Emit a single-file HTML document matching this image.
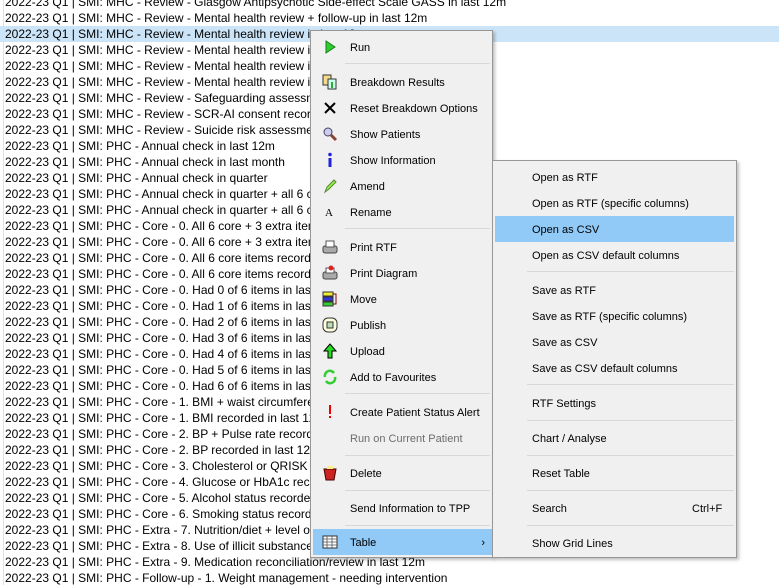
<!DOCTYPE html>
<html><head><meta charset="utf-8"><style>
body{margin:0;width:779px;height:585px;overflow:hidden;background:#fff;font-family:"Liberation Sans",Tahoma,sans-serif;font-size:12px;position:relative}
.list{position:absolute;left:0;top:-6px;width:779px}
.row{height:16px;line-height:16px;padding-left:5px;white-space:nowrap;color:#000}
.row.sel{background:#cce4f7}
.vl{position:absolute;left:3px;top:0;width:1px;height:585px;background:#d8e2ee}
.menu{position:absolute;background:#f0f0f0;border:1px solid #979797;box-shadow:2px 2px 3px rgba(0,0,0,.25);font-size:11px}
.it{position:absolute;left:2px;right:2px;height:26px;line-height:28px;white-space:nowrap;color:#000}
.it .t{position:absolute;left:37px}
.it.h{background:#91c9f7}
.it.d{color:#6d6d6d}
.sep{position:absolute;height:1px;background:#d7d7d7}
.ic{position:absolute;left:9px;top:5px;width:16px;height:16px}
</style></head><body>
<div class="vl"></div>
<div class="list">
<div class="row">2022-23 Q1 | SMI: MHC - Review - Glasgow Antipsychotic Side-effect Scale GASS in last 12m</div>
<div class="row">2022-23 Q1 | SMI: MHC - Review - Mental health review + follow-up in last 12m</div>
<div class="row sel">2022-23 Q1 | SMI: MHC - Review - Mental health review in last 12m</div>
<div class="row">2022-23 Q1 | SMI: MHC - Review - Mental health review in</div>
<div class="row">2022-23 Q1 | SMI: MHC - Review - Mental health review in</div>
<div class="row">2022-23 Q1 | SMI: MHC - Review - Mental health review in</div>
<div class="row">2022-23 Q1 | SMI: MHC - Review - Safeguarding assessment</div>
<div class="row">2022-23 Q1 | SMI: MHC - Review - SCR-AI consent recorded</div>
<div class="row">2022-23 Q1 | SMI: MHC - Review - Suicide risk assessment</div>
<div class="row">2022-23 Q1 | SMI: PHC - Annual check in last 12m</div>
<div class="row">2022-23 Q1 | SMI: PHC - Annual check in last month</div>
<div class="row">2022-23 Q1 | SMI: PHC - Annual check in quarter</div>
<div class="row">2022-23 Q1 | SMI: PHC - Annual check in quarter + all 6 core</div>
<div class="row">2022-23 Q1 | SMI: PHC - Annual check in quarter + all 6 core</div>
<div class="row">2022-23 Q1 | SMI: PHC - Core - 0. All 6 core + 3 extra items</div>
<div class="row">2022-23 Q1 | SMI: PHC - Core - 0. All 6 core + 3 extra items</div>
<div class="row">2022-23 Q1 | SMI: PHC - Core - 0. All 6 core items recorded</div>
<div class="row">2022-23 Q1 | SMI: PHC - Core - 0. All 6 core items recorded</div>
<div class="row">2022-23 Q1 | SMI: PHC - Core - 0. Had 0 of 6 items in last</div>
<div class="row">2022-23 Q1 | SMI: PHC - Core - 0. Had 1 of 6 items in last</div>
<div class="row">2022-23 Q1 | SMI: PHC - Core - 0. Had 2 of 6 items in last</div>
<div class="row">2022-23 Q1 | SMI: PHC - Core - 0. Had 3 of 6 items in last</div>
<div class="row">2022-23 Q1 | SMI: PHC - Core - 0. Had 4 of 6 items in last</div>
<div class="row">2022-23 Q1 | SMI: PHC - Core - 0. Had 5 of 6 items in last</div>
<div class="row">2022-23 Q1 | SMI: PHC - Core - 0. Had 6 of 6 items in last</div>
<div class="row">2022-23 Q1 | SMI: PHC - Core - 1. BMI + waist circumference</div>
<div class="row">2022-23 Q1 | SMI: PHC - Core - 1. BMI recorded in last 12m</div>
<div class="row">2022-23 Q1 | SMI: PHC - Core - 2. BP + Pulse rate recorded</div>
<div class="row">2022-23 Q1 | SMI: PHC - Core - 2. BP recorded in last 12m</div>
<div class="row">2022-23 Q1 | SMI: PHC - Core - 3. Cholesterol or QRISK</div>
<div class="row">2022-23 Q1 | SMI: PHC - Core - 4. Glucose or HbA1c recorded</div>
<div class="row">2022-23 Q1 | SMI: PHC - Core - 5. Alcohol status recorded</div>
<div class="row">2022-23 Q1 | SMI: PHC - Core - 6. Smoking status recorded</div>
<div class="row">2022-23 Q1 | SMI: PHC - Extra - 7. Nutrition/diet + level of</div>
<div class="row">2022-23 Q1 | SMI: PHC - Extra - 8. Use of illicit substances</div>
<div class="row">2022-23 Q1 | SMI: PHC - Extra - 9. Medication reconciliation/review in last 12m</div>
<div class="row">2022-23 Q1 | SMI: PHC - Follow-up - 1. Weight management - needing intervention</div>
</div>

<div class="menu" style="left:310px;top:30px;width:181px;height:526px">
<div class="it" style="top:3px"><svg class="ic" viewBox="0 0 16 16"><path d="M4 2L13 8L4 14Z" fill="#2fcc2f" stroke="#158015"/></svg><span class="t">Run</span></div>
<div class="sep" style="left:34px;right:2px;top:32px"></div>
<div class="it" style="top:38px"><svg class="ic" viewBox="0 0 16 16"><rect x="1" y="1" width="8" height="10" fill="#f3dc8a" stroke="#333"/><rect x="6" y="5" width="8" height="10" fill="#cfe" stroke="#333"/><rect x="9" y="8" width="2" height="6" fill="#3a3"/></svg><span class="t">Breakdown Results</span></div>
<div class="it" style="top:64px"><svg class="ic" viewBox="0 0 16 16"><path d="M3 3L13 13M13 3L3 13" stroke="#000" stroke-width="2"/></svg><span class="t">Reset Breakdown Options</span></div>
<div class="it" style="top:90px"><svg class="ic" viewBox="0 0 16 16"><circle cx="6" cy="6" r="4" fill="#cce" stroke="#446"/><path d="M9 9L14 14" stroke="#843" stroke-width="3"/></svg><span class="t">Show Patients</span></div>
<div class="it" style="top:116px"><svg class="ic" viewBox="0 0 16 16"><circle cx="8" cy="2.5" r="1.8" fill="#22d"/><rect x="6.5" y="6" width="3" height="9" fill="#22d"/></svg><span class="t">Show Information</span></div>
<div class="it" style="top:142px"><svg class="ic" viewBox="0 0 16 16"><path d="M3 14L5 9L12 2L14 4L7 11Z" fill="#9e4" stroke="#583"/></svg><span class="t">Amend</span></div>
<div class="it" style="top:168px"><span style="position:absolute;left:12px;font-family:'Liberation Serif',serif;font-size:11px">A</span><span class="t">Rename</span></div>
<div class="sep" style="left:34px;right:2px;top:197px"></div>
<div class="it" style="top:203px"><svg class="ic" viewBox="0 0 16 16"><rect x="1" y="7" width="14" height="7" rx="2" fill="#aaa" stroke="#444"/><rect x="4" y="2" width="8" height="6" fill="#fff" stroke="#555"/></svg><span class="t">Print RTF</span></div>
<div class="it" style="top:229px"><svg class="ic" viewBox="0 0 16 16"><rect x="1" y="7" width="14" height="7" rx="2" fill="#aaa" stroke="#444"/><rect x="4" y="3" width="8" height="5" fill="#fff" stroke="#555"/><circle cx="9" cy="3" r="2.5" fill="#d22"/></svg><span class="t">Print Diagram</span></div>
<div class="it" style="top:255px"><svg class="ic" viewBox="0 0 16 16"><rect x="1" y="1" width="10" height="4" fill="#ee3" stroke="#333"/><rect x="1" y="6" width="10" height="4" fill="#33d" stroke="#333"/><rect x="1" y="11" width="10" height="4" fill="#3c3" stroke="#333"/><path d="M11 3H14V13H11" fill="none" stroke="#800"/></svg><span class="t">Move</span></div>
<div class="it" style="top:281px"><svg class="ic" viewBox="0 0 16 16"><rect x="1" y="1" width="14" height="14" rx="5" fill="#ffd" stroke="#333"/><rect x="5" y="5" width="6" height="6" fill="#bdb" stroke="#333"/></svg><span class="t">Publish</span></div>
<div class="it" style="top:307px"><svg class="ic" viewBox="0 0 16 16"><path d="M8 1L14 8H10V15H6V8H2Z" fill="#2d2" stroke="#000"/></svg><span class="t">Upload</span></div>
<div class="it" style="top:333px"><svg class="ic" viewBox="0 0 16 16"><path d="M3 8A5 5 0 0 1 12 4M13 8A5 5 0 0 1 4 12" fill="none" stroke="#3c3" stroke-width="2.5"/></svg><span class="t">Add to Favourites</span></div>
<div class="sep" style="left:34px;right:2px;top:362px"></div>
<div class="it" style="top:368px"><svg class="ic" viewBox="0 0 16 16"><rect x="7" y="1" width="2" height="9" fill="#e00"/><rect x="7" y="12" width="2" height="2" fill="#e00"/></svg><span class="t">Create Patient Status Alert</span></div>
<div class="it d" style="top:394px"><span class="t">Run on Current Patient</span></div>
<div class="sep" style="left:34px;right:2px;top:424px"></div>
<div class="it" style="top:429px"><svg class="ic" viewBox="0 0 16 16"><path d="M2 4L14 4L12 15H4Z" fill="#c22" stroke="#400"/><rect x="5" y="1" width="6" height="3" fill="#fe8"/></svg><span class="t">Delete</span></div>
<div class="sep" style="left:34px;right:2px;top:459px"></div>
<div class="it" style="top:464px"><span class="t">Send Information to TPP</span></div>
<div class="sep" style="left:34px;right:2px;top:494px"></div>
<div class="it h" style="top:498px;left:2px;right:-3px"><svg class="ic" viewBox="0 0 16 16"><rect x="1" y="2" width="14" height="12" fill="#fff" stroke="#333"/><path d="M1 5H15M1 8H15M1 11H15M5 2V14M10 2V14" stroke="#555" stroke-width=".8"/></svg><span class="t">Table</span><span style="position:absolute;right:10px">›</span></div>
</div>

<div class="menu" style="left:492px;top:160px;width:243px;height:396px">
<div class="it" style="top:3px"><span class="t">Open as RTF</span></div>
<div class="it" style="top:29px"><span class="t">Open as RTF (specific columns)</span></div>
<div class="it h" style="top:55px"><span class="t">Open as CSV</span></div>
<div class="it" style="top:81px"><span class="t">Open as CSV default columns</span></div>
<div class="sep" style="left:34px;right:2px;top:110px"></div>
<div class="it" style="top:116px"><span class="t">Save as RTF</span></div>
<div class="it" style="top:142px"><span class="t">Save as RTF (specific columns)</span></div>
<div class="it" style="top:168px"><span class="t">Save as CSV</span></div>
<div class="it" style="top:194px"><span class="t">Save as CSV default columns</span></div>
<div class="sep" style="left:34px;right:2px;top:223px"></div>
<div class="it" style="top:229px"><span class="t">RTF Settings</span></div>
<div class="sep" style="left:34px;right:2px;top:259px"></div>
<div class="it" style="top:264px"><span class="t">Chart / Analyse</span></div>
<div class="sep" style="left:34px;right:2px;top:294px"></div>
<div class="it" style="top:299px"><span class="t">Reset Table</span></div>
<div class="sep" style="left:34px;right:2px;top:329px"></div>
<div class="it" style="top:334px"><span class="t">Search</span><span style="position:absolute;left:197px">Ctrl+F</span></div>
<div class="sep" style="left:34px;right:2px;top:364px"></div>
<div class="it" style="top:369px"><span class="t">Show Grid Lines</span></div>
</div>
</body></html>
